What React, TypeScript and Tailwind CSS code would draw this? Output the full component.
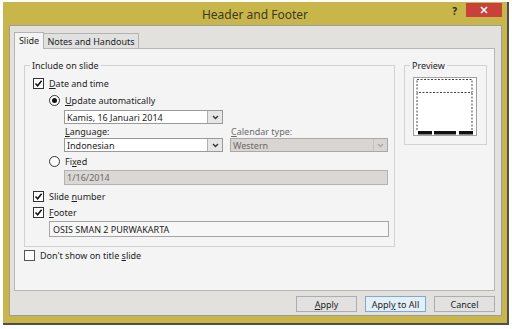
import React from "react";

function U({ children }: { children: React.ReactNode }) {
  return <span className="underline underline-offset-[1px]">{children}</span>;
}

function Check({ checked = true }: { checked?: boolean }) {
  return (
    <div className="w-[11px] h-[11px] shrink-0 bg-white border border-[#333333] flex items-center justify-center">
      {checked && (
        <svg width="9" height="9" viewBox="0 0 9 9">
          <path d="M1.5 4.6 L3.6 6.8 L7.6 1.8" fill="none" stroke="#111" strokeWidth="1.5" />
        </svg>
      )}
    </div>
  );
}

function Radio({ checked = false }: { checked?: boolean }) {
  return (
    <div className="w-[11px] h-[11px] shrink-0 rounded-full bg-white border border-[#333333] flex items-center justify-center">
      {checked && <div className="w-[5px] h-[5px] rounded-full bg-[#111]" />}
    </div>
  );
}

function Chevron({ color }: { color: string }) {
  return (
    <svg width="7" height="5" viewBox="0 0 7 5">
      <path d="M1 1 L3.5 3.5 L6 1" fill="none" stroke={color} strokeWidth="1.4" />
    </svg>
  );
}

function Select({ value, width, disabled = false }: { value: string; width: string; disabled?: boolean }) {
  return (
    <div
      className={
        "h-[14px] flex items-stretch border " +
        width +
        (disabled ? " bg-[#d8d5d2] border-[#a9a9a9] text-[#6b6b6b]" : " bg-white border-[#9a9a9a]")
      }
    >
      <div className="flex-1 pl-[2px] flex items-center">
        <span>{value}</span>
      </div>
      {disabled ? (
        <div className="w-[14px] flex items-center justify-center border-l border-[#c4c2bf]">
          <Chevron color="#a8a8a8" />
        </div>
      ) : (
        <div className="w-[15px] flex items-center justify-center bg-[#e6e6e6] border-l border-[#b0b0b0]">
          <Chevron color="#333" />
        </div>
      )}
    </div>
  );
}

function Button({ children, primary = false }: { children: React.ReactNode; primary?: boolean }) {
  return (
    <div
      className={
        "w-[61px] h-[16px] flex items-center justify-center border " +
        (primary ? "bg-[#e3eff9] border-[#7fa9cf]" : "bg-[#e1e1e1] border-[#adadad]")
      }
    >
      <span>{children}</span>
    </div>
  );
}

export default function App() {
  return (
    <div className="w-[512px] h-[329px] bg-white overflow-hidden font-['Noto_Sans',sans-serif] text-[9px] leading-[11px] text-[#1e1e1e]">
      <div className="ml-[3px] mt-[2px] w-[506px] h-[323px] bg-[#c9b64a] border-r-2 border-b-2 border-[#4e4e4e] flex flex-col">
        {/* Title bar */}
        <div className="h-[23px] shrink-0 flex items-start">
          <div className="w-[56px] shrink-0" />
          <div className="flex-1 text-center text-[12px] leading-[16px] pt-[5px] text-[#3a3a22]">Header and Footer</div>
          <div className="w-[56px] shrink-0 flex items-start justify-end pr-[5px]">
            <div className="mt-[4px] mr-[9px] text-[10px] leading-[10px] font-bold text-[#2a2a1a]">?</div>
            <div className="mt-[1px] w-[36px] h-[14px] bg-[#c8413b] flex items-center justify-center">
              <svg width="8" height="8" viewBox="0 0 8 8">
                <path d="M1 1 L7 7 M7 1 L1 7" stroke="#ffffff" strokeWidth="1.6" />
              </svg>
            </div>
          </div>
        </div>

        {/* Inner area */}
        <div className="ml-[6px] mr-[5px] h-[291px] bg-[#e3e1de] border border-[#9c9c9c] pl-[4px] pt-[6px] flex flex-col">
          {/* Tabs */}
          <div className="h-[16px] flex items-start relative z-10">
            <div className="w-[30px] h-[17px] bg-[#f4f4f4] border border-b-0 border-[#b3b3b3] flex items-center justify-center pb-[1px]">
              <span>Slide</span>
            </div>
            <div className="mt-[1px] w-[95px] h-[15px] bg-[#e1e1e1] border border-l-0 border-b-0 border-[#b3b3b3] flex items-center justify-center">
              <span>Notes and Handouts</span>
            </div>
          </div>

          {/* Panel */}
          <div className="w-[481px] h-[243px] bg-[#f4f4f4] border border-[#b6b6b6] pl-[9px] pt-[16px] flex items-start">
            <div className="flex flex-col">
              {/* Include on slide group */}
              <div className="relative w-[371px] h-[182px] border border-[#d2d2d2] flex flex-col">
                <span className="absolute left-[5px] -top-[6px] px-[2px] bg-[#f4f4f4]">Include on slide</span>
                <div className="mt-[12px] h-[11px] pl-[8px] flex items-center gap-[5px]">
                  <Check />
                  <span>
                    <U>D</U>ate and time
                  </span>
                </div>
                <div className="mt-[6px] h-[11px] pl-[24px] flex items-center gap-[5px]">
                  <Radio checked />
                  <span>
                    <U>U</U>pdate automatically
                  </span>
                </div>
                <div className="mt-[4px] ml-[39px]">
                  <Select value="Kamis, 16 Januari 2014" width="w-[159px]" />
                </div>
                <div className="mt-[2px] h-[11px] ml-[40px] flex items-center">
                  <span className="w-[166px]">
                    <U>L</U>anguage:
                  </span>
                  <span className="text-[#6b6b6b]">
                    <U>C</U>alendar type:
                  </span>
                </div>
                <div className="mt-[1px] ml-[39px] flex gap-[7px]">
                  <Select value="Indonesian" width="w-[159px]" />
                  <Select value="Western" width="w-[158px]" disabled />
                </div>
                <div className="mt-[4px] h-[11px] pl-[24px] flex items-center gap-[5px]">
                  <Radio />
                  <span>
                    Fi<U>x</U>ed
                  </span>
                </div>
                <div className="mt-[3px] ml-[39px] w-[324px] h-[15px] bg-[#dad7d4] border border-[#b2b2b2] pl-[2px] flex items-center text-[#6b6b6b]">
                  <span>1/16/2014</span>
                </div>
                <div className="mt-[6px] h-[11px] pl-[8px] flex items-center gap-[5px]">
                  <Check />
                  <span>
                    Slide <U>n</U>umber
                  </span>
                </div>
                <div className="mt-[5px] h-[11px] pl-[8px] flex items-center gap-[5px]">
                  <Check />
                  <span>
                    <U>F</U>ooter
                  </span>
                </div>
                <div className="mt-[3px] ml-[24px] w-[340px] h-[16px] bg-[#f7f7f7] border border-[#a5a5a5] pl-[3px] flex items-center">
                  <span>OSIS SMAN 2 PURWAKARTA</span>
                </div>
              </div>
              <div className="mt-[3px] h-[11px] flex items-center gap-[5px]">
                <div className="w-[11px] h-[11px] bg-white border border-[#555]" />
                <span>
                  Don't show on title <U>s</U>lide
                </span>
              </div>
            </div>

            {/* Preview group */}
            <div className="relative ml-[9px] w-[83px] h-[80px] border border-[#d2d2d2] pl-[8px] pt-[11px]">
              <span className="absolute left-[5px] -top-[6px] px-[2px] bg-[#f4f4f4]">Preview</span>
              <svg width="64" height="59" viewBox="0 0 64 59">
                <rect x="0.5" y="0.5" width="63" height="58" fill="#ffffff" stroke="#a0a0a0" />
                <rect x="4" y="2.5" width="55" height="13" fill="none" stroke="#444" strokeDasharray="2 1.5" />
                <path d="M4 16 V54 M59 16 V54" fill="none" stroke="#444" strokeDasharray="2 1.5" />
                <rect x="5" y="54" width="14" height="3.5" fill="#111" />
                <rect x="21" y="54" width="22" height="3.5" fill="#111" />
                <rect x="46" y="54" width="14" height="3.5" fill="#111" />
              </svg>
            </div>
          </div>

          {/* Buttons */}
          <div className="mt-[5px] w-[481px] flex justify-end gap-[8px]">
            <Button>
              <U>A</U>pply
            </Button>
            <Button primary>
              Appl<U>y</U> to All
            </Button>
            <Button>Cancel</Button>
          </div>
        </div>
      </div>
    </div>
  );
}
